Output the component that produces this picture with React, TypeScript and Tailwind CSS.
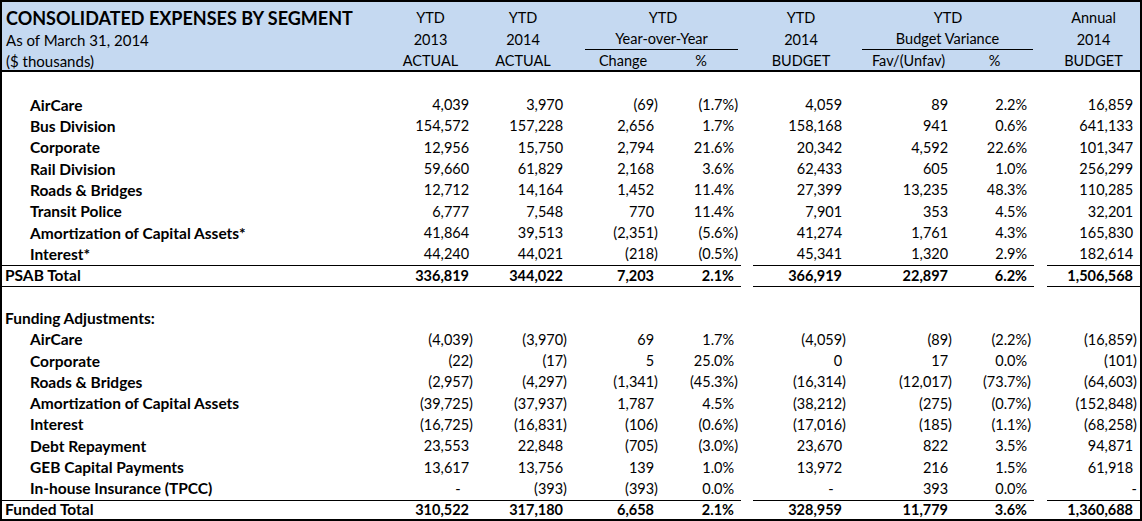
import React from "react";

type Row = {
  label: string;
  vals?: string[];
  kind?: "item" | "total" | "heading" | "blank";
};

const rows: Row[] = [
  { label: "", kind: "blank" },
  { label: "AirCare", vals: ["4,039", "3,970", "(69)", "(1.7%)", "4,059", "89", "2.2%", "16,859"] },
  { label: "Bus Division", vals: ["154,572", "157,228", "2,656", "1.7%", "158,168", "941", "0.6%", "641,133"] },
  { label: "Corporate", vals: ["12,956", "15,750", "2,794", "21.6%", "20,342", "4,592", "22.6%", "101,347"] },
  { label: "Rail Division", vals: ["59,660", "61,829", "2,168", "3.6%", "62,433", "605", "1.0%", "256,299"] },
  { label: "Roads & Bridges", vals: ["12,712", "14,164", "1,452", "11.4%", "27,399", "13,235", "48.3%", "110,285"] },
  { label: "Transit Police", vals: ["6,777", "7,548", "770", "11.4%", "7,901", "353", "4.5%", "32,201"] },
  { label: "Amortization of Capital Assets*", vals: ["41,864", "39,513", "(2,351)", "(5.6%)", "41,274", "1,761", "4.3%", "165,830"] },
  { label: "Interest*", vals: ["44,240", "44,021", "(218)", "(0.5%)", "45,341", "1,320", "2.9%", "182,614"] },
  { label: "PSAB Total", kind: "total", vals: ["336,819", "344,022", "7,203", "2.1%", "366,919", "22,897", "6.2%", "1,506,568"] },
  { label: "", kind: "blank" },
  { label: "Funding Adjustments:", kind: "heading" },
  { label: "AirCare", vals: ["(4,039)", "(3,970)", "69", "1.7%", "(4,059)", "(89)", "(2.2%)", "(16,859)"] },
  { label: "Corporate", vals: ["(22)", "(17)", "5", "25.0%", "0", "17", "0.0%", "(101)"] },
  { label: "Roads & Bridges", vals: ["(2,957)", "(4,297)", "(1,341)", "(45.3%)", "(16,314)", "(12,017)", "(73.7%)", "(64,603)"] },
  { label: "Amortization of Capital Assets", vals: ["(39,725)", "(37,937)", "1,787", "4.5%", "(38,212)", "(275)", "(0.7%)", "(152,848)"] },
  { label: "Interest", vals: ["(16,725)", "(16,831)", "(106)", "(0.6%)", "(17,016)", "(185)", "(1.1%)", "(68,258)"] },
  { label: "Debt Repayment", vals: ["23,553", "22,848", "(705)", "(3.0%)", "23,670", "822", "3.5%", "94,871"] },
  { label: "GEB Capital Payments", vals: ["13,617", "13,756", "139", "1.0%", "13,972", "216", "1.5%", "61,918"] },
  { label: "In-house Insurance (TPCC)", vals: ["-", "(393)", "(393)", "0.0%", "-", "393", "0.0%", "-"] },
  { label: "Funded Total", kind: "total", vals: ["310,522", "317,180", "6,658", "2.1%", "328,959", "11,779", "3.6%", "1,360,688"] },
];

// Excel style: positives keep room for the ")" so digits line up
const Num = ({ v, w, last }: { v?: string; w: string; last?: boolean }) => {
  let content: React.ReactNode = null;
  if (v === undefined) content = null;
  else if (v.startsWith("(")) content = v;
  else if (v === "-")
    content = last ? (
      <>-</>
    ) : (
      <>
        -<span className="invisible">0)</span>
      </>
    );
  else
    content = (
      <>
        {v}
        <span className="invisible">)</span>
      </>
    );
  return <div className={`${w} whitespace-nowrap pr-[3px] text-right`}>{content}</div>;
};

const DataRow = ({ row, isLast, isFirst }: { row: Row; isLast: boolean; isFirst: boolean }) => {
  const total = row.kind === "total";
  const bold = total ? "font-bold" : "";
  const line = total ? (isLast ? "border-t border-black" : "border-y border-black") : "";
  const h = isFirst ? "h-[22.67px]" : isLast ? "h-[19px]" : "h-[21.33px]";
  const v = row.vals ?? [];
  return (
    <div className={`flex ${h} ${bold}`}>
      <div className={`flex w-[739px] items-center ${line}`}>
        <div
          className={`w-[383px] whitespace-nowrap text-[15.5px] font-bold ${
            row.kind === undefined ? "pl-[28px]" : "pl-[3px]"
          }`}
        >
          {row.label}
        </div>
        <Num v={v[0]} w="w-[91px]" />
        <Num v={v[1]} w="w-[94px]" />
        <div className="w-[15px]" />
        <Num v={v[2]} w="w-[76px]" />
        <Num v={v[3]} w="w-[80px]" />
      </div>
      <div className="w-[12px]" />
      <div className={`flex w-[281px] items-center ${line}`}>
        <Num v={v[4]} w="w-[96px]" />
        <div className="w-[13px]" />
        <Num v={v[5]} w="w-[93px]" />
        <Num v={v[6]} w="w-[79px]" />
      </div>
      <div className="w-[13px]" />
      <div className={`flex w-[93px] items-center ${line}`}>
        <Num v={v[7]} w="w-[93px]" last />
      </div>
    </div>
  );
};

export default function App() {
  return (
    <div className="w-[1142px] border-2 border-black bg-white font-[Lato,sans-serif] text-[14.5px] leading-none text-black">
      {/* HEADER */}
      <div className="border-b-2 border-black bg-[#c5d9f1]">
        <div className="flex h-[28px] items-center pt-[4px]">
          <div className="w-[383px] whitespace-nowrap pl-[4px] text-[18px] font-bold">
            CONSOLIDATED EXPENSES BY SEGMENT
          </div>
          <div className="w-[91px] text-center">YTD</div>
          <div className="w-[94px] text-center">YTD</div>
          <div className="w-[15px]" />
          <div className="w-[156px] text-center">YTD</div>
          <div className="w-[12px]" />
          <div className="w-[96px] text-center">YTD</div>
          <div className="w-[13px]" />
          <div className="w-[172px] text-center">YTD</div>
          <div className="w-[13px]" />
          <div className="w-[93px] text-center">Annual</div>
        </div>
        <div className="flex h-[20px]">
          <div className="flex w-[383px] items-center whitespace-nowrap pl-[4px] text-[15px]">As of March 31, 2014</div>
          <div className="flex w-[91px] items-center justify-center">2013</div>
          <div className="flex w-[94px] items-center justify-center">2014</div>
          <div className="w-[15px]" />
          <div className="flex w-[153px] items-center justify-center border-b border-black">Year-over-Year</div>
          <div className="w-[15px]" />
          <div className="flex w-[96px] items-center justify-center">2014</div>
          <div className="w-[13px]" />
          <div className="flex w-[171px] items-center justify-center border-b border-black">Budget Variance</div>
          <div className="w-[14px]" />
          <div className="flex w-[93px] items-center justify-center">2014</div>
        </div>
        <div className="flex h-[20px] items-center pt-[2px]">
          <div className="w-[383px] whitespace-nowrap pl-[4px] text-[15px]">($ thousands)</div>
          <div className="w-[91px] text-center">ACTUAL</div>
          <div className="w-[94px] text-center">ACTUAL</div>
          <div className="w-[15px]" />
          <div className="w-[76px] text-center">Change</div>
          <div className="w-[80px] text-center">%</div>
          <div className="w-[12px]" />
          <div className="w-[96px] text-center">BUDGET</div>
          <div className="w-[13px]" />
          <div className="w-[93px] text-center">Fav/(Unfav)</div>
          <div className="w-[79px] text-center">%</div>
          <div className="w-[13px]" />
          <div className="w-[93px] text-center">BUDGET</div>
        </div>
      </div>

      {/* BODY */}
      {rows.map((r, i) => (
        <DataRow key={i} row={r} isFirst={i === 0} isLast={i === rows.length - 1} />
      ))}
    </div>
  );
}
